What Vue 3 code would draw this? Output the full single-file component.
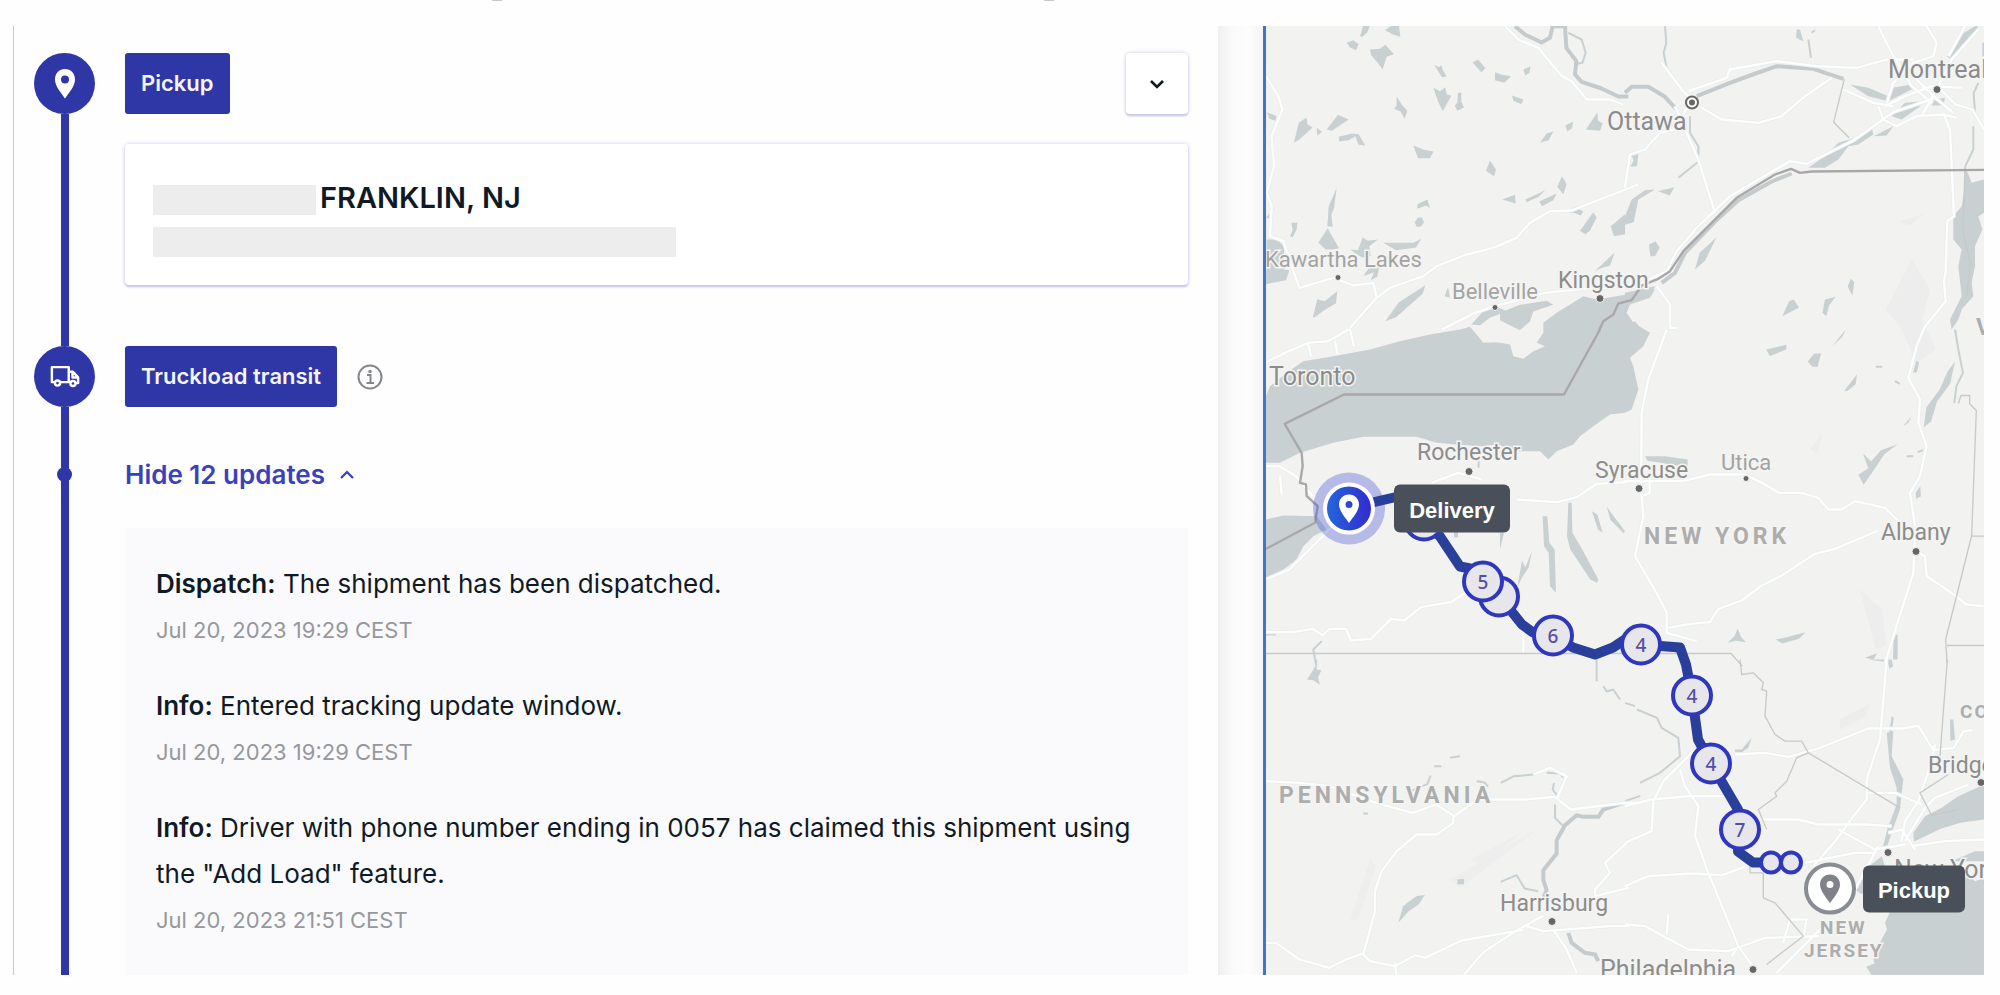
<script setup>
import { ref } from 'vue'

const expanded = ref(true)

const updates = [
  { kind: 'Dispatch:', text: 'The shipment has been dispatched.', time: 'Jul 20, 2023 19:29 CEST' },
  { kind: 'Info:', text: 'Entered tracking update window.', time: 'Jul 20, 2023 19:29 CEST' },
  {
    kind: 'Info:',
    text: 'Driver with phone number ending in 0057 has claimed this shipment using the "Add Load" feature.',
    time: 'Jul 20, 2023 21:51 CEST',
  },
]

// Map geometry, split in tiles drawn at a third of their own unit.
const tiles = [
  {
    at: 'translate(1250 0) scale(0.33333)',
    water:
      'M330 110l10-32h20l-8 20-14 14zM405 92l20-14h22l4 34-20-6zM290 130l20-8 16 12-8 18-18-8zM360 150l30-2 16-12 26 28-22 8-12 38-16-22-18-20zM552 195l14 8 8-6 4 14 12 20-14 2zM668 190l16-10 22 26-12 12zM735 218l20 8 28 4-20 20-28-8zM820 210l22-10-4 20-12 8zM550 265l20 10 16-12 4 22 14 4-26 46-14-30zM624 280h10v26l8 18-20 10-8-16 8-8zM440 290l14 24 18 20-8 24-12-22-20-8 8-10zM786 288l34 12-6 14-24-10zM52 338l28 12-4 14-18-6zM132 430l14-60 24-16 2 20 16 10-40 36zM200 385l16 12-14 12zM230 390l34-44 32 14-50 34zM266 412l40-10 20 2 20 34-20-2-10-26-20 12-28 4zM490 438l30 12 30 6-10 20h-36zM720 484l18 26-6 20-24-16zM870 430l20-28 20-6-14 26zM946 378l24-12-4 20-14 10zM1008 390l34-52 2 24 14 10-8 22zM936 530l14 24-10 30-18-22zM757 600l38-14 2 26zM826 600l60-28-20 20-36 16zM868 606l52-24-10 20-34 18zM956 640l18-18 26 14-8 12-20-8zM990 694l40-56 10 16-20 40-14 10zM232 680l4-60 24-54-8 60-8 20 4 36zM502 614l30-14 8 26-12-8-26 10zM494 668l10-14h12l6 14-10 14h-12zM124 670h18l-2 20-12 24-8-4 8-18zM205 730l28-44 34 60-20 4h-20zM50 720h30l22 20v70l16 2-10 30-60 12zM300 750l24 2 14-38 16 10 30-4-26 20 4 30-26 4zM400 730h90l24-12-16 26-60 8zM340 830l20-30 30-8-8 40-20 10 10-24zM188 955l14-56 22 6 38-30-4 36-40 24-20 16zM406 965l40-56 80-52-8 26-80 70zM1082 680l43-36v60l-33 6zM1034 815l60-56-14 40-30 8zM48 655l26-32-18 34zM584 890l10-28 6 32zM664 975l36-40 40-14 30 14-50 20-30 22zM750 940l60-24 80-12 20 12-60 20-10 30-30 26-60-30z',
    streams: 'M955 100l40 20 12 40-10 30-24 4',
    rivers: 'M795 80l30 25 50 24 25-14 8-36M910 80h35l4 65 30 40-4 40 20 22 60 20 50 24h30',
    roads:
      'M48 230L85 290 97 330 65 410 72 500 50 580 65 620 60 710 100 725 125 800 148 865 250 835 310 858 370 850 380 895M765 80l40 40 60 25 70 85 30 15 45 55h70l40 15M300 985l80-90 40-30 100-35 40-30 90-35 80-20 70-30 40-45 60-35 65-2 200-78M575 990l100-50 60-20 150-40 140-15',
    borders: '',
    frontier: '',
  },
  {
    at: 'translate(1250 330) scale(0.33333)',
    water:
      'M48 200L60 170 110 130 160 95 250 80 360 60 450 35 540 15 630 0 660-8 680 15 700 40 740 38 780 45 790 80 820 88 850 65 885 50 860 40 880 10 880-20 920-50 1000-100 1040-90 1125-104 1215-120 1200-95 1140-75 1130-50 1150-20 1200 10 1180 50 1140 85 1150 110 1165 180 1145 240 1125 250 1080 255 1030 290 990 320 970 345 920 365 895 390 870 365 800 365 740 345 690 350 620 345 560 340 500 322 340 322 250 340 150 370 90 400 48 400zM48 570l52-12 100 2 30 40-40 20-30 30-20 40-40 30-52 25zM878 560h14l6 80 16 20 4 130-18-20-4-100-14-20zM955 520h10l2 90 30 50 48 90-4 10-20-10-60-90-10-40zM1026 545l16 10 16 55-14-10zM1070 530l10 15 45 60-4 6-40-40zM846 664l-10 50-20 30-14 30 14-80 10 20zM750 610h12l-12 50zM612 600h12v24h-12z',
    streams: 'M215 935l-25 25 5 30M686 395v20M48 915h30',
    rivers: '',
    roads:
      'M45 100l60-30 70-30 60-5 60-35M300 0l12 50M175 45l8 35M255 35l8 40M48 410h40l50 30 50 60M90 440l5 55M48 750l70-30 60-60 70-70M545 460l80-30 70 20M800 510l120 8 60-15 60-40 90-5M48 908h80l60-10 30 20 20-20h50l15 35 60-5 60-60 40 5 50-40 90-15 60-40M820 910v60',
    borders: 'M48 972H1443l34 38',
    frontier: 'M1050 0L942 195H282L104 283 155 370 158 410 150 460 168 465 170 500 203 530 195 580 48 658',
  },
  {
    at: 'translate(1625 0) scale(0.33333)',
    water:
      'M1020 500l20 50 37-10v100l-17 10 12 40-22 50v60l-10 50 5 40-35 40-10 30-20 30-5-30 35-70-10-90 10-50-25-30v-70l25-30 10-60zM550 505l50-35 40-40 50-15 50-30 5 20-45 30-30 5-30 40-40 25zM800 350l40-40 60-5-20 20-50 35zM675 255l55 10 60 25 10-25 60-10 10 10-50 25-30 15-60-15zM965 170l35-60 50-30h10l-30 50-50 50zM930 300l30-5-5 23h-35zM745 410l60-30-20 28zM515 90l10 0 10 35-22-10zM15 460h25l-4 40-20 2 10-20zM0 650l20-50 40-28 30-2-50 30-14 68-26 8zM100 575l48-12-14 25zM72 735l20-10 12 20-14 25h-14zM60 790l10-14zM210 810l14-50 50-46-34 70zM472 950l20-44 14-6 16 24-30 16zM592 940l8-40 32-8-20 26-8 32zM668 860l10-22 10 10-6 40zM0 980l30-15 20 25zM0 880l90-20-10 24-60 20-20 18z',
    streams: 'M120 80l4 50-8 30 10 50M550 120l8 55M560 100l10-8M160 535l60-48M195 350v50l25 40v30M1045 380v70l-24 50M1060 250l-14 30 4 60M1075 130v40',
    rivers: 'M0 280l20-18h50l50 30 36 40M215 290l100-40 60-22 80-28 110 8 90 30M500 522l-60 24-100 56-70 64-90 94-30 60-40 30',
    roads:
      'M190 275l115-40 10-25 140-25 120 15 120 5 90-25h80M230 325l60 35 110 10 70-20 70-60 80-55M655 270l90 40 60 10M110 190l60 80 30 30-50 90-45 10-45 50-45 15-15 100M150 320l70 160 50 160M-100 870l150-20 75-35 30-60 60-70 100-95 120-70 60-35 50 8 140-70 120-85 120-40M760 80l40 80 60 100 60 50M905 80l30 50-10 40-60 20-60 60-20 60M1060 90l-80 90-40 80-50 90M1020 80l-50 90M780 320l60-30 80-30 90 5M760 320l15 40 40 20 60-30 80-5 40 10M865 230l60 60 60 50M955 340l20 50 12 260-20 15-5 150-5 30 5 60-65 80M1077 390l-35-60-50-15-60-60M95 860l40 55v70h20',
    borders: 'M658 238L626 368 672 415M1020 500l-6 200 22 90-10 100',
    frontier: 'M1077 511L560 516 525 520 498 508 450 525 335 595 175 755 135 815 100 838 50 858 20 902-20 912-35 945-65 965-78 994',
  },
  {
    at: 'translate(1625 330) scale(0.33333)',
    water:
      'M60 380h60l68 10v30l-30-12-90-14zM424 60l60-14v14l-50 20zM548 96l20-24h20l-10 40h-16zM622 50l40-50-10 22zM658 184l38-50-4 30-24 20zM990 96l-14 66-40 54-18 60-22 18 8-60 40-54 24-54zM700 436l30-20-16-44 24 24 30-34 50-18-40 30-40 60-22 32zM834 290l26-30-10 20zM872 490l14-20 2 30-14 8zM308 940l20-20 10-22 10 24 14 16-30-4zM452 930l30-6 60-16-20 20-50 14zM806 920l12-6v76h-14zM720 985l36-14-10 19zM864 130l10-36 8 4-6 30z',
    streams: 'M990 0l10 60 14 70-20 40-6 50M845 380h20M878 368l16-6M752 112h20M810 155l14 8',
    rivers: '',
    roads:
      'M125 0L70 150 50 250 48 480 55 560 30 680 100 800 125 850 125 910 215 935M-5 455h180l80-20h105l60 30 40 25h70l50 15 30 35h40l40-25 90 20 40 40M130 895l65-12 60-5 25-40 70-25 60-45 60-30 100-65 60-15 130-55M900-10L875 50 850 145 885 210 880 280 905 350 885 440 855 490 870 590M880 670l20 10 5 60 60 40 60 45 50 5M870 600l-5 130-60 190-24 80M50 500l24-10v-60',
    borders: 'M1000 222l8-24h26v25l20 20L1040 618 962 930l4 70M1040 620h37M966 948h111',
    frontier: '',
  },
  {
    at: 'translate(1250 660) scale(0.33333)',
    water: 'M172 60l24-40-4-20h10l-2 30 14 2-10 22 6 22-20-14zM445 790l14-50 40-30 26-4-20 30-30 20zM622 660l20-2v16h-20z',
    streams:
      'M915 435v40l25 25M752 370l40-20 60-5M890 340l40 2 10 12M912 370l-4 20 12 16M752 667l48-20 24 40 40 8M1040 0v65M1060 80l10 16 20-6 20 30M482 394l50-20 10-26M552 320h22M600 295l30-5M680 365l24 4 10 12M340 462h14',
    rivers: 'M1120 430l-60 20-15 22h-45l-20-5-35 30-25 45v40l-40 50v30l10 30-10 24M955 820l10 30 40 30 30 5 10 20',
    roads:
      'M48 365l100 5 90 10 140 50 110 30 70-25 55 35 70-50h140l90-8 50 38 160-20h50M610 470v20l-50 35h-60l-60 50-45 60-20 60v60l-35 130 20 20 75 15 60-33 30 8 110-52 185-32M435 910l4 38M48 850h30l70 50 90 25 50-25 55-20M640 948l60-70 100-65 80-45M830 800l50 15 200-15h60M850 345l50-20 50 25-30 70M910 810l40 60 30 70M1130 550l-65 60 15 30-45 50v20l100-25',
    borders: '',
    frontier: '',
  },
  {
    at: 'translate(1625 660) scale(0.33333)',
    water:
      'M790 700l230-60 30 25 27-10v293H740l-16-26 24-10-4-20 26-52 16-30-6-20 14-30zM865 520l35-50 50-25 50-35 77-35v105l-70 10-60 18-54 26-26 12zM980 605l70-30h27v30zM785 220l20-5-5 75 35 70-5 40-5 50-25 70-15 45h-12l15-60 27-70v-50l-20-60zM330 270h20l30-35-10 30-20 14-20-2zM975 180h10l5 60-14 4zM690 690l30-60 50-40 10 30-40 60-30 24zM800 170l6 4-6 50-8 0zM730 0h70l4 20-10 8-6-20z',
    streams: 'M0 130l30 10M36 150l60 25 14 30 50 30 5 55-60 50-60 30M0 425l46-16',
    rivers: '',
    roads:
      'M0 440l80-20 110-10h130M0 550l80-35 5-90 30-60 90-90M165 330l15 50 40 60-10 90 40 110 90 220 50 70M0 680l70-30 130-8 90 5 70-25M330 285l90-5 70 12 90-25 150-60h100l50-8 45 72 60-5 30-50 27-5M785 0l-20 240-40 120v60l-40 50-50 70-70 80M410 480h110l60 15h140l80 5M730 400h80l80 35M930 255l-20 80-30 90-40 60-10 60M860 560l100-15 117-5M640 510l110 60 90-15M0 795l60 5 130 70 120 5 110-40 160-5M320 890l20-30M455 940l140-140M540 610l150-30h60M125 825l5-60M840 545l60-100 30-30 100-40M790 520l40-10 40 60M475 850l20-70h50l-10 50M690 690l70-130',
    borders:
      'M345 0l5 45 35-5 30 30-5 20 15 5-5 75 30 55 30 20h50l20 35 275 165M550 280l-35 15-30 70-35 35 5 10-55 40 25 60M375 620v20h40v75l35 15 85 100-20 15-90 70M967 0L945 290M970 345l-85 55 35 68 80-18',
    frontier: '',
  },
]

const places = [
  { name: 'Ottawa', x: 1607, y: 130, kind: 'city big' },
  { name: 'Montreal', x: 1888, y: 78, kind: 'city big' },
  { name: 'Kawartha Lakes', x: 1265, y: 267, kind: 'city faint' },
  { name: 'Belleville', x: 1452, y: 299, kind: 'city faint' },
  { name: 'Kingston', x: 1558, y: 288, kind: 'city' },
  { name: 'Toronto', x: 1269, y: 385, kind: 'city big' },
  { name: 'Rochester', x: 1417, y: 460, kind: 'city' },
  { name: 'Syracuse', x: 1595, y: 478, kind: 'city' },
  { name: 'Utica', x: 1721, y: 470, kind: 'city faint' },
  { name: 'Albany', x: 1881, y: 540, kind: 'city' },
  { name: 'Harrisburg', x: 1500, y: 911, kind: 'city' },
  { name: 'Philadelphia', x: 1600, y: 978, kind: 'city big' },
  { name: 'Bridgeport', x: 1928, y: 773, kind: 'city' },
  { name: 'New York', x: 1894, y: 878, kind: 'city big' },
  { name: 'NEW YORK', x: 1644, y: 544, kind: 'state' },
  { name: 'PENNSYLVANIA', x: 1279, y: 803, kind: 'state' },
  { name: 'VERMONT', x: 1976, y: 335, kind: 'state' },
  { name: 'CONNECTICUT', x: 1960, y: 718, kind: 'state small' },
  { name: 'NEW', x: 1820, y: 934, kind: 'state small' },
  { name: 'JERSEY', x: 1804, y: 957, kind: 'state small' },
]

const dots = [
  [1937, 90, 4], [1338, 278, 3], [1495, 308, 3], [1600, 299, 4], [1469, 472, 4], [1639, 489, 4],
  [1746, 479, 3], [1916, 552, 4], [1552, 922, 4], [1753, 970, 4], [1981, 783, 4], [1888, 853, 4],
]

const stops = [
  { x: 1424, y: 521, n: '' }, { x: 1499, y: 597, n: '' }, { x: 1483, y: 582, n: '5' },
  { x: 1553, y: 636, n: '6' }, { x: 1641, y: 645, n: '4' }, { x: 1692, y: 696, n: '4' },
  { x: 1711, y: 764, n: '4' }, { x: 1740, y: 830, n: '7' },
]
</script>

<template>
  <div class="page">
    <div class="topbar"><i class="tick first"></i><i class="tick second"></i></div>
    <main class="board">
      <section class="timeline" aria-label="Shipment timeline">
        <div class="row">
          <div class="rail">
            <span class="node">
              <svg width="22" height="30" viewBox="0 0 22 30"><path fill="#fff" fill-rule="evenodd" d="M11 0C5 0 1 4.500 1 10.500C1 17.500 8 25 11 29.500C14 25 21 17.500 21 10.500C21 4.500 17 0 11 0zM11 6.500a4 4 0 1 1 0 8a4 4 0 1 1 0-8z" /></svg>
            </span>
            <span class="line"></span>
          </div>
          <div class="body stop">
            <div class="head spread">
              <h2 class="tag">Pickup</h2>
              <button class="toggle" type="button" aria-label="Show pickup details">
                <svg width="16" height="10" viewBox="0 0 16 10"><path d="M2 2l6 6 6-6" fill="none" stroke="#10171f" stroke-width="2.600" /></svg>
              </button>
            </div>
            <div class="card">
              <div class="place"><span class="mask short"></span><strong>FRANKLIN, NJ</strong></div>
              <span class="mask long"></span>
            </div>
          </div>
        </div>

        <div class="row">
          <div class="rail">
            <span class="node">
              <svg width="30" height="23" viewBox="0 0 32 24" fill="none" stroke="#fff" stroke-width="2.600" stroke-linejoin="round">
                <path d="M5.500 18H2V2h18v16H11M20 7h4.500l5.500 6v6h-2.500M20 18h2M24 7v6h6" />
                <circle cx="8" cy="19" r="2.700" /><circle cx="24.500" cy="19.500" r="2.700" />
              </svg>
            </span>
            <span class="line"></span>
          </div>
          <div class="body transit">
            <div class="head">
              <h2 class="tag">Truckload transit</h2>
              <button class="info" type="button" aria-label="About truckload transit">
                <svg width="26" height="26" viewBox="0 0 26 26" fill="none" stroke="#83868b" stroke-width="2">
                  <circle cx="13" cy="13" r="11.500" /><path d="M10 11h3.500v8M9.500 19h7.500" /><circle cx="13" cy="7.500" r="0.800" />
                </svg>
              </button>
            </div>
          </div>
        </div>

        <div class="row grow">
          <div class="rail"><span class="line"></span><span class="dot"></span></div>
          <div class="body log">
            <button class="hide" type="button" :aria-expanded="expanded" @click="expanded = !expanded">
              Hide 12 updates
              <svg width="16" height="10" viewBox="0 0 16 10"><path d="M2 8l6-6 6 6" fill="none" stroke="#3a41bd" stroke-width="2.200" /></svg>
            </button>
            <ul v-if="expanded" class="updates">
              <li v-for="u in updates" :key="u.kind + u.text">
                <p><b>{{ u.kind }}</b> {{ u.text }}</p>
                <time>{{ u.time }}</time>
              </li>
            </ul>
          </div>
        </div>
      </section>

      <div class="gutter"></div>

      <section class="map" aria-label="Route map">
        <svg class="canvas" viewBox="1266 26 718 950" preserveAspectRatio="xMidYMid slice">
          <defs>
            <linearGradient id="pin-fill"><stop offset="0" stop-color="#2468dc" /><stop offset="1" stop-color="#3329cd" /></linearGradient>
          </defs>
          <rect x="1266" y="26" width="718" height="950" fill="#f2f2f1" />
          <g fill="#ecedec">
            <path d="M1912 260l18 30-8 30 14 30-20 14-14-34-16-20zM1860 590l22 20 4 36-10 4zM1810 450l12-16-4 20zM1840 720l30-16-6 14-24 12zM1900 222l24-8-14 12z" />
            <path d="M1450 880l90-52-80 60zM1350 920l20-60 6 6-18 54zM1470 860l50-26-36 32z" opacity="0.700" />
          </g>
          <g v-for="t in tiles" :key="'w' + t.at" :transform="t.at">
            <path :d="t.water" fill="#c9d0d2" />
            <path :d="t.streams" class="stroke" stroke="#c9d0d2" stroke-width="6" />
            <path :d="t.rivers" class="stroke" stroke="#c5cbcd" stroke-width="12" />
          </g>
          <g v-for="t in tiles" :key="'r' + t.at" :transform="t.at">
            <path :d="t.roads" class="stroke" stroke="#ebeeee" stroke-width="12" />
          </g>
          <g v-for="t in tiles" :key="'s' + t.at" :transform="t.at">
            <path :d="t.roads" class="stroke" stroke="#fdfefe" stroke-width="7" />
          </g>
          <g v-for="t in tiles" :key="'b' + t.at" :transform="t.at">
            <path :d="t.borders" class="stroke" stroke="#c8c9c9" stroke-width="4" />
            <path :d="t.frontier" class="stroke" stroke="#a9a7a9" stroke-width="7" />
          </g>

          <g fill="#666" stroke="#f6f6f6" stroke-width="1">
            <circle v-for="d in dots" :key="d.join()" :cx="d[0]" :cy="d[1]" :r="d[2]" />
          </g>
          <circle cx="1692" cy="103" r="6" fill="#fff" stroke="#666" stroke-width="2" />
          <circle cx="1692" cy="103" r="3" fill="#666" />
          <text v-for="p in places" :key="p.name + p.x" :x="p.x" :y="p.y" :class="p.kind">{{ p.name }}</text>

          <circle cx="1349" cy="509" r="36" fill="#3548cf" opacity="0.320" />
          <path class="stroke" stroke="#2a3f99" stroke-width="10" d="M1368 504L1394 498 1410 497 1424 520 1440 537 1460 567 1470 569 1483 582 1499 597 1510 610 1522 625 1533 633 1553 636 1573 648 1595 655 1613 648 1625 640 1641 645 1680 648 1686 665 1692 696 1698 740 1711 764 1738 810 1739 830 1738 852 1753 863 1771 863" />
          <g v-for="s in stops" :key="s.x">
            <circle :cx="s.x" :cy="s.y" r="19" class="bubble" />
            <text :x="s.x" :y="s.y + 7" class="count">{{ s.n }}</text>
          </g>
          <circle cx="1771" cy="863" r="10" class="bubble" />
          <circle cx="1791" cy="863" r="10" class="bubble" />

          <circle cx="1349" cy="509" r="24" fill="url(#pin-fill)" stroke="#fff" stroke-width="4" />
          <path transform="translate(1338 495)" fill="#fff" fill-rule="evenodd" d="M11 0C5 0 1 4.500 1 10C1 16.500 8 24 11 28.500C14 24 21 16.500 21 10C21 4.500 17 0 11 0zM11 6.500a3.500 3.500 0 1 1 0 7a3.500 3.500 0 1 1 0-7z" />
          <rect x="1394" y="485" width="116" height="48" rx="6" fill="#4a5059" />
          <text x="1452" y="518" class="tip">Delivery</text>

          <circle cx="1830" cy="889" r="24" fill="#fff" stroke="#898c92" stroke-width="4" />
          <path transform="translate(1819 875)" fill="#7f8389" fill-rule="evenodd" d="M11 0C5 0 1 4.500 1 10C1 16.500 8 24 11 28.500C14 24 21 16.500 21 10C21 4.500 17 0 11 0zM11 6.500a3.500 3.500 0 1 1 0 7a3.500 3.500 0 1 1 0-7z" />
          <rect x="1863" y="866" width="102" height="47" rx="6" fill="#4a5059" />
          <text x="1914" y="898" class="tip">Pickup</text>
        </svg>
      </section>
    </main>
  </div>
</template>

<style>
body {
  margin: 0;
  background: #fefefe;
}
</style>

<style scoped>
.page {
  font-family: Inter, Roboto, sans-serif;
  color: #101a26;
  padding: 0 16px 19px 13px;
}
.topbar {
  display: flex;
  height: 26px;
}
.tick {
  width: 10px;
  height: 1px;
  background: #c8c8c8;
}
.first {
  margin-left: 24.300%;
}
.second {
  margin-left: 27.500%;
}
.board {
  display: grid;
  grid-template-columns: 1205fr 45px 721fr;
}
.timeline {
  display: flex;
  flex-direction: column;
  border-left: 1px solid #c9c9c9;
  padding: 27px 30px 0 20px;
}
.row {
  display: grid;
  grid-template-columns: 61px minmax(0, 1fr);
  column-gap: 30px;
}
.grow {
  flex: 1;
}
.rail {
  position: relative;
  display: flex;
  flex-direction: column;
  align-items: center;
}
.node {
  display: grid;
  place-items: center;
  width: 61px;
  height: 61px;
  border-radius: 50%;
  background: #2f36a6;
}
.line {
  flex: 1;
  width: 8px;
  background: #2f36a6;
}
.dot {
  position: absolute;
  top: 20px;
  width: 15px;
  height: 15px;
  border-radius: 50%;
  background: #2f36a6;
}
.stop {
  padding-bottom: 61px;
}
.transit {
  padding-bottom: 40px;
}
.head {
  display: flex;
  align-items: center;
  gap: 20px;
}
.spread {
  justify-content: space-between;
}
.tag {
  margin: 0;
  padding: 0 16px;
  border-radius: 3px;
  background: #2f36a6;
  color: #f4f4fb;
  font-size: 22px;
  font-weight: 600;
  line-height: 61px;
}
button {
  font: inherit;
  color: inherit;
  background: none;
  border: 0;
  padding: 0;
  cursor: pointer;
}
.toggle {
  display: grid;
  place-items: center;
  width: 62px;
  height: 61px;
  border-radius: 4px;
  background: #fff;
  box-shadow: 0 0 4px #cfcdf0, 0 2px 2px #c6c4e6;
}
.info {
  display: flex;
}
.card {
  display: flex;
  flex-direction: column;
  gap: 12px;
  margin-top: 30px;
  padding: 41px 28px 28px;
  border-radius: 4px;
  background: #fff;
  box-shadow: 0 0 4px #cfcdf0, 0 2px 2px #c6c4e6;
}
.place {
  display: flex;
  gap: 4px;
  font-size: 29px;
  line-height: 26px;
}
.place strong {
  font-weight: 600;
}
.mask {
  height: 30px;
  background: #ededed;
}
.short {
  width: 163px;
}
.long {
  width: 523px;
}
.hide {
  display: flex;
  align-items: center;
  gap: 14px;
  color: #3a41bd;
  font-size: 26px;
  font-weight: 600;
  line-height: 56px;
}
.updates {
  list-style: none;
  display: flex;
  flex-direction: column;
  gap: 30px;
  margin: 25px 0 0;
  padding: 33px 31px 32px;
  background: #fafafc;
}
.updates p {
  margin: 0;
  font-size: 26px;
  line-height: 46px;
}
.updates b {
  font-weight: 600;
}
.updates time {
  display: block;
  color: #96989d;
  font-size: 22px;
  line-height: 46px;
}
.gutter {
  background: linear-gradient(90deg, #efefef, #fafafa 30%, #fdfdfd 70%, #f4f4f4);
}
.map {
  position: relative;
  overflow: hidden;
  border-left: 3px solid #3f74cc;
}
.canvas {
  position: absolute;
  inset: 0;
  width: 100%;
  height: 100%;
}
.stroke {
  fill: none;
  stroke-linejoin: round;
}
.city,
.state {
  font-family: Roboto, sans-serif;
  font-size: 23px;
  fill: #8c8c8c;
  stroke: #f4f4f3;
  stroke-width: 3px;
  paint-order: stroke;
}
.big {
  font-size: 25px;
}
.faint {
  font-size: 22px;
  fill: #a3a3a3;
}
.state {
  font-weight: 700;
  letter-spacing: 4px;
  fill: #adadad;
}
.small {
  font-size: 19px;
  letter-spacing: 2px;
}
.bubble {
  fill: #e7e7eb;
  stroke: #2f38bd;
  stroke-width: 4px;
}
.count {
  font: 500 19px "Noto Sans", sans-serif;
  fill: #5550a5;
  text-anchor: middle;
}
.tip {
  font: bold 22px "Liberation Sans", Arial, sans-serif;
  fill: #fff;
  text-anchor: middle;
}
</style>
